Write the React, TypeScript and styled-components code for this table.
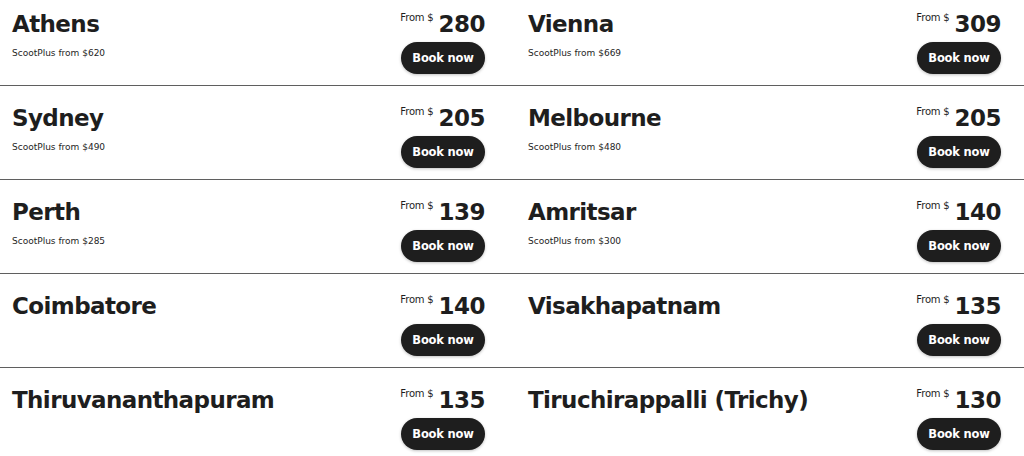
import styled, {createGlobalStyle} from "styled-components";

const GlobalStyle = createGlobalStyle`
  body {
    margin: 0;
    background: #fff;
    font-family: "DejaVu Sans", "Noto Sans", sans-serif;
    color: #1e1e1e;
    overflow: hidden;
  }
`;

type Fare = {
  city: string;
  price: number;
  plus?: number;
};

const fares: Fare[] = [
  {city: "Athens", price: 280, plus: 620},
  {city: "Vienna", price: 309, plus: 669},
  {city: "Sydney", price: 205, plus: 490},
  {city: "Melbourne", price: 205, plus: 480},
  {city: "Perth", price: 139, plus: 285},
  {city: "Amritsar", price: 140, plus: 300},
  {city: "Coimbatore", price: 140},
  {city: "Visakhapatnam", price: 135},
  {city: "Thiruvananthapuram", price: 135},
  {city: "Tiruchirappalli (Trichy)", price: 130},
];

const List = styled.div`
  margin-top: -8px;
`;

const Row = styled.div`
  display: grid;
  grid-template-columns: 473px 473px;
  column-gap: 43px;
  padding: 0 0 0 12px;
  height: 93px;
  border-bottom: 1px solid #5f5f5f;
`;

const Cell = styled.div`
  display: flex;
  justify-content: space-between;
  padding-top: 17px;
`;

const Info = styled.div`
  display: flex;
  flex-direction: column;
`;

const City = styled.h3`
  margin: 0;
  font-size: 23px;
  font-weight: 700;
  line-height: 30px;
  letter-spacing: -0.6px;
`;

const Plus = styled.p`
  margin: 8px 0 0;
  font-size: 9px;
  line-height: 12px;
  font-weight: 400;
`;

const Side = styled.div`
  display: flex;
  flex-direction: column;
  align-items: flex-end;
`;

const Price = styled.div`
  display: flex;
  align-items: flex-start;
  gap: 5px;
  height: 30px;
`;

const From = styled.span`
  font-size: 10px;
  line-height: 12px;
  margin-top: 3px;
  letter-spacing: -0.2px;
`;

const Amount = styled.span`
  font-size: 23px;
  font-weight: 700;
  line-height: 30px;
  letter-spacing: -0.5px;
`;

const BookButton = styled.button`
  margin-top: 3px;
  width: 84px;
  height: 32px;
  border: none;
  border-radius: 16px;
  background: #1e1e1e;
  color: #fff;
  font-family: inherit;
  font-size: 11.5px;
  font-weight: 700;
  letter-spacing: -0.2px;
  box-shadow: 0 1px 3px rgba(0, 0, 0, 0.25);
  cursor: pointer;
`;

const FareCell = ({fare}: {fare: Fare}): JSX.Element => (
  <Cell>
    <Info>
      <City>{fare.city}</City>
      {fare.plus && <Plus>ScootPlus from ${fare.plus}</Plus>}
    </Info>
    <Side>
      <Price>
        <From>From $</From>
        <Amount>{fare.price}</Amount>
      </Price>
      <BookButton>Book now</BookButton>
    </Side>
  </Cell>
);

export default function App(): JSX.Element {
  const rows: Fare[][] = [];
  for (let i = 0; i < fares.length; i += 2) {
    rows.push(fares.slice(i, i + 2));
  }

  return (
    <>
      <GlobalStyle />
      <List>
        {rows.map((pair) => (
          <Row key={pair[0].city}>
            {pair.map((fare) => (
              <FareCell key={fare.city} fare={fare} />
            ))}
          </Row>
        ))}
      </List>
    </>
  );
}
